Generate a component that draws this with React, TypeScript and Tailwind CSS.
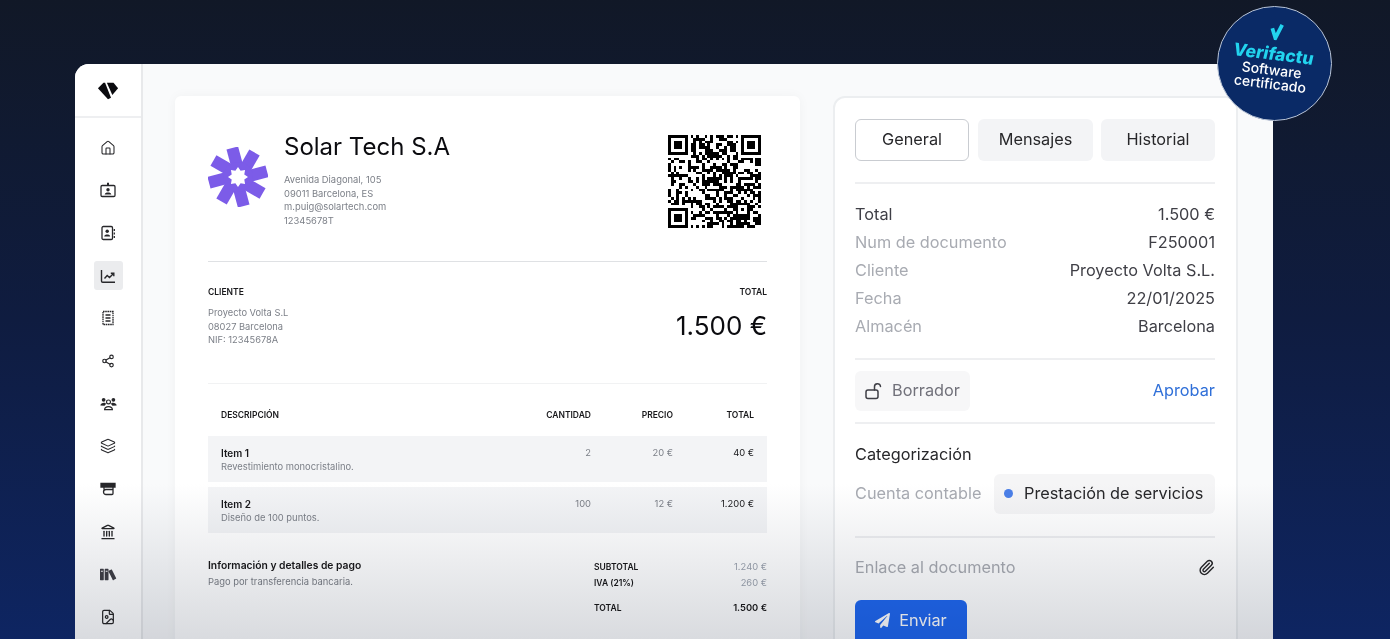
import React from "react";
import { Home, Share2, Layers, Landmark, FileImage, Paperclip } from "lucide-react";
import { FaPaperPlane } from "react-icons/fa";
import { ImBooks } from "react-icons/im";

const font = { fontFamily: "Inter, sans-serif" };

// qr pattern, generated from a fixed seed so it stays the same between runs
const QR_SIZE = 33;
function qrCells() {
  const cells: [number, number][] = [];
  let s = 71;
  const finder = (x: number, y: number) => x < 8 && y < 8;
  for (let y = 0; y < QR_SIZE; y++) {
    for (let x = 0; x < QR_SIZE; x++) {
      s = (s * 1103515245 + 12345) & 0x7fffffff;
      const skip =
        finder(x, y) ||
        finder(QR_SIZE - 1 - x, y) ||
        finder(x, QR_SIZE - 1 - y) ||
        (x >= 24 && x <= 28 && y >= 24 && y <= 28);
      if (!skip && (s >> 16) % 100 < 52) cells.push([x, y]);
    }
  }
  return cells;
}

const QrCode = () => {
  const f = (x: number, y: number) => (
    <g key={`${x}-${y}`}>
      <path fillRule="evenodd" d={`M${x} ${y}h7v7h-7zM${x + 1} ${y + 1}v5h5v-5z`} />
      <rect x={x + 2} y={y + 2} width={3} height={3} />
    </g>
  );
  return (
    <svg viewBox="0 0 33 33" className="w-[93px] h-[93px]" shapeRendering="crispEdges" fill="#000">
      {f(0, 0)}
      {f(26, 0)}
      {f(0, 26)}
      <path fillRule="evenodd" d="M24 24h5v5h-5zM25 25v3h3v-3z" />
      <rect x={26} y={26} width={1} height={1} />
      {qrCells().map(([x, y]) => (
        <rect key={`${x}:${y}`} x={x} y={y} width={1} height={1} />
      ))}
    </svg>
  );
};

const starPoints = Array.from({ length: 16 }, (_, i) => {
  const r = i % 2 === 0 ? 10 : 6.8;
  const a = (i * Math.PI) / 8 - Math.PI / 2;
  return `${30 + r * Math.cos(a)},${30 + r * Math.sin(a)}`;
}).join(" ");

const SolarLogo = () => (
  <svg viewBox="0 0 60 60" className="w-[60px] h-[60px]" fill="#7c5ce8">
    {[0, 45, 90, 135, 180, 225, 270, 315].map((a) => (
      <rect key={a} x="26" y="0.500" width="12" height="24" transform={`rotate(${a - 15} 30 30)`} />
    ))}
    <circle cx="30" cy="30" r="15" />
    <polygon fill="#fff" points={starPoints} />
  </svg>
);

const Gem = () => (
  <svg viewBox="0 0 24 20" className="w-[22px] h-[19px]" fill="#0b0b0f">
    <path d="M1 7.500 7 1.500h1.800L15.300 18 12 19.500z" />
    <path d="M10.800 1.500H18l5 6-6.300 7.500z" />
  </svg>
);

const IdBadge = () => (
  <svg viewBox="0 0 16 16" className="w-4 h-4" fill="none" stroke="#27272a" strokeWidth="1.300">
    <rect x="1" y="3.500" width="14" height="11" rx="1.200" />
    <path d="M8 .8v3.200" strokeWidth="2" />
    <circle cx="8" cy="7.800" r="1.700" fill="#27272a" stroke="none" />
    <path d="M4.700 12.500c.3-2.600 6.300-2.600 6.600 0z" fill="#27272a" stroke="none" />
  </svg>
);

const ContactBook = () => (
  <svg viewBox="0 0 16 16" className="w-4 h-4" fill="none" stroke="#27272a" strokeWidth="1.300">
    <rect x="2" y="1.500" width="10.500" height="13" rx="1.300" />
    <path d="M14.300 4v2M14.300 7.500v2M14.300 11v2" />
    <circle cx="7.200" cy="6.300" r="1.700" fill="#27272a" stroke="none" />
    <path d="M4.200 11.500c.3-2.600 5.700-2.600 6 0z" fill="#27272a" stroke="none" />
  </svg>
);

const Trend = () => (
  <svg viewBox="0 0 16 16" className="w-4 h-4" fill="none" stroke="#27272a" strokeWidth="1.400">
    <path d="M1.500 2v11a1.200 1.200 0 0 0 1.200 1.200H15" />
    <path d="M4.500 10.500 7.200 7.500l2.300 2 4-4" />
    <path d="M10.800 5.200h3v3" />
  </svg>
);

const Receipt = () => (
  <svg viewBox="0 0 16 16" className="w-4 h-4" fill="none" stroke="#27272a" strokeWidth="1.300">
    <path d="M3 1.500h10v13H3z" strokeDasharray="1.600 .6" />
    <path d="M5.500 5h5M5.500 8h5M5.500 11h5" />
  </svg>
);

const Team = () => (
  <svg viewBox="0 0 18 16" className="w-[17px] h-[15px]" fill="#27272a">
    <circle cx="3.800" cy="4" r="2" />
    <circle cx="14.200" cy="4" r="2" />
    <path d="M.3 10c.2-3 5.700-3.600 6-1.500L4.800 10.500z" />
    <path d="M17.700 10c-.2-3-5.700-3.600-6-1.500l1.500 2z" />
    <g fill="none" stroke="#27272a" strokeWidth="1.200">
      <circle cx="9" cy="6.300" r="2.100" />
      <path d="M4.800 14.500c.3-4.300 8.100-4.300 8.400 0z" />
    </g>
  </svg>
);

const Router = () => (
  <svg viewBox="0 0 16 16" className="w-4 h-4" fill="none" stroke="#27272a" strokeWidth="1.300">
    <path d="M1 2.500h14v3.500H1z" fill="#27272a" />
    <path d="M4 6v2.500M13 6v6.500a1 1 0 0 1-1 1H6a1.500 1.500 0 0 1 0-5h7" />
  </svg>
);

const sideIcon = "w-4 h-4 text-zinc-800";
const navItems: { icon: React.ReactNode; active?: boolean }[] = [
  { icon: <Home className={sideIcon} strokeWidth={1.600} /> },
  { icon: <IdBadge /> },
  { icon: <ContactBook /> },
  { icon: <Trend />, active: true },
  { icon: <Receipt /> },
  { icon: <Share2 className="w-[14px] h-[14px] text-zinc-800" strokeWidth={2} /> },
  { icon: <Team /> },
  { icon: <Layers className={sideIcon} strokeWidth={1.600} /> },
  { icon: <Router /> },
  { icon: <Landmark className={sideIcon} strokeWidth={2} /> },
  { icon: <ImBooks className="w-[17px] h-[17px] text-zinc-700" /> },
  { icon: <FileImage className={sideIcon} strokeWidth={1.800} /> },
];

const Sidebar = () => (
  <aside className="w-[68px] shrink-0 bg-white border-r-2 border-[#e8e9eb] flex flex-col">
    <div className="h-[54px] flex items-center justify-center border-b-2 border-[#eeeff1]">
      <Gem />
    </div>
    <nav className="flex flex-col items-center pt-[15px] gap-[13.700px]">
      {navItems.map((n, i) => (
        <div
          key={i}
          className={`w-[29px] h-[29px] flex items-center justify-center rounded-[3px] ${n.active ? "bg-[#ebecee]" : ""}`}
        >
          {n.icon}
        </div>
      ))}
    </nav>
  </aside>
);

const rows = [
  { name: "Item 1", desc: "Revestimiento monocristalino.", qty: "2", price: "20 €", total: "40 €" },
  { name: "Item 2", desc: "Diseño de 100 puntos.", qty: "100", price: "12 €", total: "1.200 €" },
];

const Invoice = () => (
  <section className="w-[625px] h-[600px] shrink-0 bg-white rounded-md shadow-[0_0_12px_rgba(0,0,0,0.04)] pt-[32px] px-[33px]">
    <div className="flex justify-between items-start h-[134px] border-b border-[#dfe1e4]">
      <div className="flex">
        <div className="mt-[19px]">
          <SolarLogo />
        </div>
        <div className="ml-[16px]">
          <h1 className="text-[24px] leading-[36px] text-[#0b0b0f] mt-[1px]">Solar Tech S.A</h1>
          <div className="mt-[8px] text-[9.400px] leading-[13.500px] text-[#7b7f87]">
            <p>Avenida Diagonal, 105</p>
            <p>09011 Barcelona, ES</p>
            <p>m.puig@solartech.com</p>
            <p>12345678T</p>
          </div>
        </div>
      </div>
      <div className="mt-[7px] mr-[6px]">
        <QrCode />
      </div>
    </div>

    <div className="flex justify-between h-[122px] border-b border-[#f1f2f3] pt-[24px]">
      <div>
        <p className="text-[8.500px] leading-[12px] font-semibold text-[#18181b]">CLIENTE</p>
        <div className="mt-[8px] text-[9.300px] leading-[13.500px] text-[#7b7f87]">
          <p>Proyecto Volta S.L</p>
          <p>08027 Barcelona</p>
          <p>NIF: 12345678A</p>
        </div>
      </div>
      <div className="text-right">
        <p className="text-[8.500px] leading-[12px] font-semibold text-[#18181b]">TOTAL</p>
        <p className="mt-[11px] text-[26px] leading-[34px] text-[#0b0b0f]">1.500 €</p>
      </div>
    </div>

    <div className="flex items-center h-[52px] pt-[10px] px-[13px] text-[8.500px] font-semibold text-[#18181b]">
      <span className="flex-1">DESCRIPCIÓN</span>
      <span className="w-[80px] text-right">CANTIDAD</span>
      <span className="w-[82px] text-right">PRECIO</span>
      <span className="w-[81px] text-right">TOTAL</span>
    </div>

    <div className="flex flex-col gap-[5px]">
      {rows.map((r) => (
        <div key={r.name} className="flex h-[46px] px-[13px] pt-[9.500px] bg-[#f3f4f6] text-[9.400px] leading-[14px]">
          <div className="flex-1">
            <p className="text-[10px] font-semibold text-[#18181b]">{r.name}</p>
            <p className="mt-[0.500px] text-[#7b7f87]">{r.desc}</p>
          </div>
          <span className="w-[80px] text-right text-[#7b7f87]">{r.qty}</span>
          <span className="w-[82px] text-right text-[#7b7f87]">{r.price}</span>
          <span className="w-[81px] text-right text-[#18181b]">{r.total}</span>
        </div>
      ))}
    </div>

    <div className="flex justify-between mt-[25px]">
      <div className="text-[9.400px] leading-[14px]">
        <p className="text-[10.300px] font-semibold text-[#18181b]">Información y detalles de pago</p>
        <p className="mt-[3px] text-[#7b7f87]">Pago por transferencia bancaria.</p>
      </div>
      <div className="w-[173px] pt-[1px] text-[8.500px]">
        <div className="flex justify-between h-[16px] items-center">
          <span className="font-semibold text-[#18181b]">SUBTOTAL</span>
          <span className="text-[9.400px] text-[#9ca3af]">1.240 €</span>
        </div>
        <div className="flex justify-between h-[16px] items-center">
          <span className="font-semibold text-[#18181b]">IVA (21%)</span>
          <span className="text-[9.400px] text-[#9ca3af]">260 €</span>
        </div>
        <div className="flex justify-between h-[16px] items-center mt-[9px]">
          <span className="font-semibold text-[#18181b]">TOTAL</span>
          <span className="text-[9.400px] font-semibold text-[#18181b]">1.500 €</span>
        </div>
      </div>
    </div>
  </section>
);

const Detail = ({ label, value, strong }: { label: string; value: string; strong?: boolean }) => (
  <div className="flex justify-between h-[28px] items-center text-[16.300px]">
    <span className={strong ? "text-[#3f3f46]" : "text-[#a8abb2]"}>{label}</span>
    <span className="text-[#3f3f46]">{value}</span>
  </div>
);

const UnlockIcon = () => (
  <svg viewBox="0 0 18 18" className="w-[18px] h-[18px]" fill="none" stroke="#3f3f46" strokeWidth="1.500">
    <rect x="1" y="8" width="12" height="8.500" rx="2" />
    <path d="M9.500 8V4.800a3 3 0 0 1 6-.3" strokeLinecap="round" />
  </svg>
);

const SidePanel = () => (
  <section className="w-[405px] h-[600px] shrink-0 bg-white rounded-xl border-2 border-[#eceef0] pl-[20px] pr-[21px] pt-[21px]">
    <div className="flex text-[16.300px] text-[#27272a] pb-[21px] border-b-2 border-[#eeeff1]">
      <div className="w-[114px] h-[42px] pb-[2px] flex items-center justify-center rounded-md border border-[#c9ccd1] bg-white">
        General
      </div>
      <div className="w-[115px] h-[42px] pb-[2px] ml-[9px] flex items-center justify-center rounded-md bg-[#f3f4f6]">
        Mensajes
      </div>
      <div className="w-[114px] h-[42px] pb-[2px] ml-[8px] flex items-center justify-center rounded-md bg-[#f3f4f6]">
        Historial
      </div>
    </div>

    <div className="pt-[16px] pb-[18px] border-b-2 border-[#eeeff1]">
      <Detail label="Total" value="1.500 €" strong />
      <Detail label="Num de documento" value="F250001" />
      <Detail label="Cliente" value="Proyecto Volta S.L." />
      <Detail label="Fecha" value="22/01/2025" />
      <Detail label="Almacén" value="Barcelona" />
    </div>

    <div className="flex justify-between items-center h-[64px] border-b-2 border-[#eeeff1] text-[16.300px]">
      <div className="w-[115px] h-[40px] pb-[1px] flex items-center justify-center gap-[9px] rounded-md bg-[#f7f7f8] text-[#71717a]">
        <UnlockIcon />
        Borrador
      </div>
      <span className="text-[#2f6fd8] pb-[2px]">Aprobar</span>
    </div>

    <p className="text-[16.300px] leading-[24px] text-[#27272a] mt-[18px]">Categorización</p>
    <div className="flex justify-between items-center mt-[8px] pb-[22px] border-b-2 border-[#eeeff1] text-[16.300px]">
      <span className="text-[#a8abb2] pb-[2px]">Cuenta contable</span>
      <div className="w-[221px] h-[40px] pb-[2px] flex items-center rounded-md bg-[#f5f5f6] pl-[10px] text-[#27272a]">
        <span className="w-[9px] h-[9px] rounded-full bg-[#4a7fe8] mr-[11px] mt-[1px]" />
        Prestación de servicios
      </div>
    </div>

    <div className="flex justify-between items-center h-[62px] pb-[4px] text-[16.300px] text-[#a8abb2]">
      Enlace al documento
      <Paperclip className="w-[17px] h-[17px] text-[#27272a]" strokeWidth={2} />
    </div>

    <div className="w-[112px] h-[44px] pb-[3px] flex items-center justify-center gap-[9px] rounded-md bg-[#1f68f0] text-white text-[16.300px]">
      <FaPaperPlane className="w-[15px] h-[15px]" />
      Enviar
    </div>
  </section>
);

const VerifactuBadge = () => (
  <div className="absolute left-[1217px] top-[6px] w-[115px] h-[115px] rounded-full bg-[#0a2a66] border-[1.500px] border-[#b9c4d6] flex flex-col items-center text-white">
    <div className="rotate-[7deg] flex flex-col items-center">
      <svg viewBox="0 0 16 18" className="w-[15px] h-[17px] mt-[16px]" fill="none" stroke="#22d3ee" strokeWidth="4">
        <path d="M3 6l4.500 10L13 1" />
      </svg>
      <span className="text-[17.500px] leading-[19px] font-extrabold -skew-x-6 text-[#22d3ee] mt-[4px] whitespace-nowrap">
        Verifactu
      </span>
      <span className="text-[14px] leading-[14px] font-medium">Software</span>
      <span className="text-[14px] leading-[14px] font-medium">certificado</span>
    </div>
  </div>
);

export default function App() {
  return (
    <div
      className="relative w-[1390px] h-[639px] overflow-hidden bg-gradient-to-b from-[#111827] via-[#0f1c40] to-[#0e2562]"
      style={font}
    >
      <div className="absolute left-[75px] top-[64px] w-[1198px] h-[640px] rounded-tl-[14px] rounded-tr-[4px] overflow-hidden flex bg-[#f9fafb]">
        <Sidebar />
        <main className="flex gap-[33px] pl-[32px] pt-[32px]">
          <Invoice />
          <SidePanel />
        </main>
        <div className="absolute left-0 right-0 top-[420px] h-[155px] bg-gradient-to-b from-white to-[#d9dbdf] mix-blend-multiply pointer-events-none" />
      </div>
      <VerifactuBadge />
    </div>
  );
}
